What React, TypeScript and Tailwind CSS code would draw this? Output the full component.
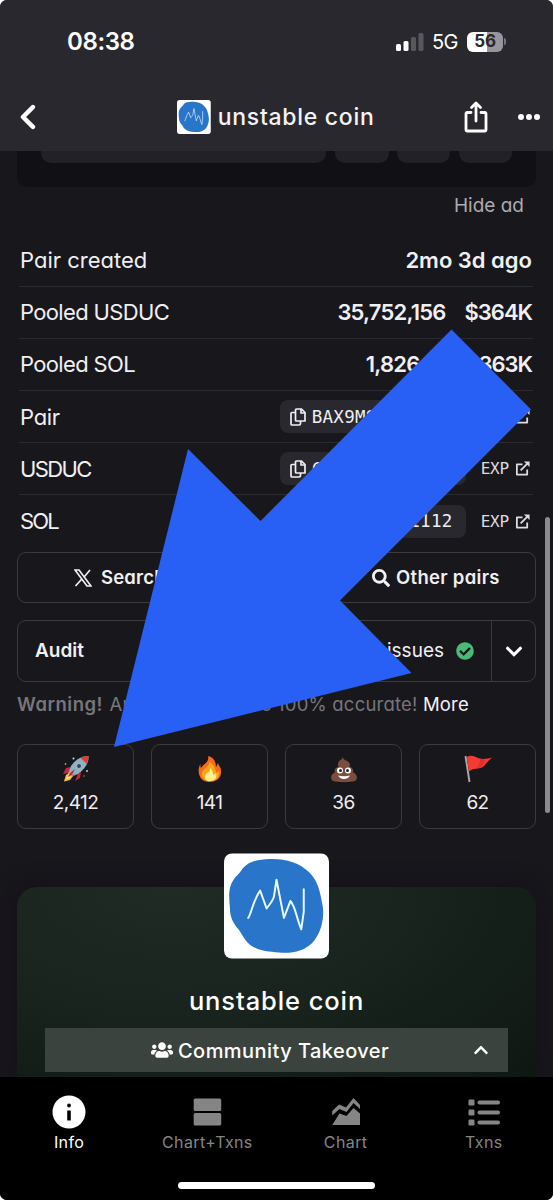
import type { ReactNode } from "react";
import { FaCheckCircle, FaChevronDown, FaChevronUp, FaSearch, FaUsers } from "react-icons/fa";

function CoinLogo({ className }: { className: string }) {
  return (
    <svg viewBox="0 0 106 106" className={className}>
      <rect width="106" height="106" rx="8" fill="#fff" />
      <path
        d="M46 5.500C62 5 76 9 86 19C95 28 97 39 99 50C102 62 99 78 91 88C82 99 68 101 56 100C42 99 32 98 24 90C20 86 18 81 15 77C9 70 6 64 6 55C5 45 4 34 10 26C13 22 17 19 19 15C26 7 36 6 46 5.500Z"
        fill="#2975ca"
      />
      <path
        d="M24.500 65C28 60 29 48 36.500 37.500L43 55.500C47 50 50 47 50.500 43L53 26.500L60.500 65L67 48C72 53 73 65 78 76.500L80.500 59V36"
        fill="none"
        stroke="#e8fbff"
        strokeWidth="2"
        strokeLinecap="round"
        strokeLinejoin="round"
      />
    </svg>
  );
}

function StatusBar() {
  return (
    <div className="flex h-[83px] items-center justify-between pr-[47px] pl-[67px] text-white">
      <span className="text-[24px] leading-none font-semibold tracking-[-0.4px]">08:38</span>
      <div className="flex items-center">
        <svg viewBox="0 0 28 20" className="h-5 w-7">
          <rect x="0" y="12" width="5" height="7" rx="1.500" fill="#fff" />
          <rect x="7.500" y="9" width="5" height="10" rx="1.500" fill="#fff" />
          <rect x="15" y="5" width="5" height="14" rx="1.500" fill="#57575c" />
          <rect x="22.500" y="1" width="5" height="18" rx="1.500" fill="#57575c" />
        </svg>
        <span className="ml-2 w-[28px] text-[20px] leading-none tracking-[-0.6px]">5G</span>
        <div className="ml-[7px] flex h-5 w-9 items-center justify-center rounded-[6px] bg-[linear-gradient(90deg,#fff_56%,#96969b_56%)] text-[17px] leading-none font-bold tracking-[-0.3px] text-[#29282e]">
          56
        </div>
        <div className="ml-px h-[7px] w-[2px] rounded-r-full bg-[#77777c]" />
      </div>
    </div>
  );
}

function Header() {
  return (
    <header className="h-[151px] bg-[#29282e]">
      <StatusBar />
      <div className="flex h-[68px] items-center pr-3 pl-5 text-white">
        <svg viewBox="0 0 16 26" className="h-[26px] w-4">
          <path d="M13 3L3 13L13 23" fill="none" stroke="#fff" strokeWidth="4.500" strokeLinecap="round" strokeLinejoin="round" />
        </svg>
        <CoinLogo className="ml-[141px] h-[34px] w-[34px]" />
        <span className="ml-[7px] w-[248px] text-[23px] leading-none font-medium tracking-[0.72px] whitespace-nowrap text-[#f3f2f6]">
          unstable coin
        </span>
        <svg viewBox="0 0 24 32" className="h-8 w-6 shrink-0" fill="none" stroke="#fff" strokeWidth="2.800" strokeLinecap="round" strokeLinejoin="round">
          <path d="M7 11.500H3.500Q2 11.500 2 13V28.500Q2 30 3.500 30H20.500Q22 30 22 28.500V13Q22 11.500 20.500 11.500H17M12 20V3M7.500 6.500L12 2L16.500 6.500" />
        </svg>
        <svg viewBox="0 0 24 8" className="ml-[29px] h-2 w-6 shrink-0" fill="#fff">
          <circle cx="4" cy="4" r="3" />
          <circle cx="12" cy="4" r="3" />
          <circle cx="20" cy="4" r="3" />
        </svg>
      </div>
    </header>
  );
}

function AdPanel() {
  return (
    <div className="mx-[17px] flex h-[36px] rounded-b-[10px] bg-[#111015] pl-6">
      <div className="h-3 w-[285px] rounded-b-[10px] bg-[#222126]" />
      <div className="ml-[9px] h-3 w-[54px] rounded-b-[10px] bg-[#222126]" />
      <div className="ml-[8px] h-3 w-[53px] rounded-b-[10px] bg-[#222126]" />
      <div className="ml-[9px] h-3 w-[53px] rounded-b-[10px] bg-[#222126]" />
    </div>
  );
}

function Row({ label, labelClass, children }: { label: string; labelClass: string; children: ReactNode }) {
  return (
    <div className="flex h-[52.1px] items-center justify-between border-b border-[#2b2a30] pl-px text-[22px] text-[#f0eff3] last:border-b-0">
      <span className={labelClass}>{label}</span>
      <div className="flex items-center">{children}</div>
    </div>
  );
}

function CopyIcon() {
  return (
    <svg viewBox="0 0 16 18" className="mr-[6px] h-[18px] w-4" fill="none" stroke="#f0eff3" strokeWidth="1.700" strokeLinejoin="round">
      <path d="M6.500 1H11.500L15 4.500V13H6.500Q5.500 13 5.500 12V2Q5.500 1 6.500 1Z" />
      <path d="M11 1V5H15" />
      <path d="M5.500 4.500H2Q1 4.500 1 5.500V16Q1 17 2 17H9Q10.500 17 10.500 15.500V13" />
    </svg>
  );
}

function ExternalIcon() {
  return (
    <svg viewBox="0 0 16 16" className="ml-[6px] h-[15px] w-[15px]" fill="none" stroke="#dddce0" strokeWidth="1.900" strokeLinejoin="round">
      <path d="M8 3.500H2V14.500H13V9M6 10L14 2" />
      <path d="M9.500 0.500H15.500V6.500Z" fill="#dddce0" stroke="none" />
    </svg>
  );
}

function AddressRow({ label, labelClass, address }: { label: string; labelClass: string; address: string }) {
  return (
    <Row label={label} labelClass={labelClass}>
      <div className="flex h-[33px] w-[186px] items-center rounded-[8px] bg-[#29282e] pl-[10px] font-['DejaVu_Sans_Mono',monospace] text-[17.500px] tracking-[0.3px] whitespace-nowrap">
        <CopyIcon />
        {address}
      </div>
      <span className="ml-[15px] font-['DejaVu_Sans_Mono',monospace] text-[16px] tracking-[-0.2px] text-[#dddce0]">EXP</span>
      <span className="mr-[3px]">
        <ExternalIcon />
      </span>
    </Row>
  );
}

function Pair({ amount, value }: { amount: string; value: string }) {
  return (
    <div className="flex font-semibold">
      <span className="tracking-[-0.8px]">{amount}</span>
      <span className="mr-px ml-[19px] tracking-[-1px]">{value}</span>
    </div>
  );
}

function Rocket() {
  return (
    <svg viewBox="0 0 28 28" className="h-7 w-7">
      <path d="M9 12L4 13L1 19L7 18ZM16 19L13 26L18 23L19 17Z" fill="#c5283d" />
      <path d="M26.500 1C19 1 13 5 9 11L6 19L9 22L16 19C23 14 27 8 26.500 1Z" fill="#8fb2c2" />
      <path d="M26.500 1C24 1 21 1.500 18.500 3L25 9C26 6 26.700 4 26.500 1Z" fill="#e13d38" />
      <path d="M6 19L9 22L16 19L11 20Z" fill="#587280" />
      <path d="M7 18L4 20L2 26.500L8 25L11 21Z" fill="#f9c33f" />
      <path d="M7 20L4 24L8 23Z" fill="#fff3b6" />
      <path d="M13 14L8 18L6 22L10 20Z" fill="#c5283d" />
      <circle cx="17" cy="11" r="2.500" fill="#32485d" stroke="#b9cbd3" strokeWidth="0.800" />
      <circle cx="11.500" cy="3.500" r="1" fill="#ddd" />
      <circle cx="3.500" cy="9" r="0.800" fill="#ddd" />
      <circle cx="25" cy="16" r="0.900" fill="#ddd" />
      <circle cx="22" cy="21" r="0.700" fill="#99a" />
    </svg>
  );
}

function Fire() {
  return (
    <svg viewBox="0 0 28 28" className="h-7 w-7">
      <path d="M12 1C14 7 6 10 5 13C4 12 4.500 10 4.500 9C2.500 12 2 17 3.500 20.500C5 25 9 27 14 27C21 27 26 22 25 15C25 12 22 10 22 8C21 9 21 11 20 12C20 6 17 2 12 1Z" fill="#f96a18" />
      <path d="M13 6C15 11 7 13 6 18C5 22 8 26 14 26C20 26 24 22 23 16L20 18C20 14 17 9 13 6Z" fill="#fda61e" />
      <path d="M14 13C15 17 10 18 9 21C8 24 10 26 14 26C19 26 21 23 20 18L17 20C17 17 16 14 14 13Z" fill="#fff08b" />
    </svg>
  );
}

function Poop() {
  return (
    <svg viewBox="0 0 28 28" className="h-7 w-7">
      <path d="M13 1C13 5 8 5 8 9C8 10 8 11 8.500 12C5 12 4 16 5 17.500C0.500 19 0 24 3 26C7 27.500 21 27.500 25 26C28 24 27.500 19 23 17.500C24 15 22 12 19.500 12C21 8 18 6 15 5C13 4 13 3 13 1Z" fill="#7b4d3e" />
      <circle cx="10" cy="15.500" r="3" fill="#fff" />
      <circle cx="18" cy="15.500" r="3" fill="#fff" />
      <circle cx="10.500" cy="15.500" r="1.500" fill="#31211e" />
      <circle cx="17.500" cy="15.500" r="1.500" fill="#31211e" />
      <path d="M8 20.500Q14 22 20 20.500Q18 24 14 24Q10 24 8 20.500Z" fill="#fff" />
    </svg>
  );
}

function Flag() {
  return (
    <svg viewBox="0 0 28 28" className="h-7 w-7">
      <path d="M1.500 1L5.500 27" stroke="#aaa9ad" strokeWidth="1.900" />
      <path d="M2.800 2C7 -0.500 11 1.500 14 3C19 5 24 3.500 28 2.500C24 6 22 9 19 12C14 15 10 12 5 16.500Z" fill="#f53a35" />
      <path d="M15 3.500C17 5 16 9 12 13.500L18 12C20 8 21 5 21 4.500Z" fill="#d42427" opacity="0.550" />
    </svg>
  );
}

function Reaction({ icon, count }: { icon: ReactNode; count: string }) {
  return (
    <div className="flex h-[85px] flex-col items-center rounded-[9px] border-[1.500px] border-[#3b3a3f] pt-[10px] text-[19px] leading-none text-[#efeef2]">
      {icon}
      <span className="mt-[10px] tracking-[-0.6px]">{count}</span>
    </div>
  );
}

function Tab({ label, active, children }: { label: string; active?: boolean; children: ReactNode }) {
  return (
    <div className={active ? "flex flex-1 flex-col items-center text-white" : "flex flex-1 flex-col items-center text-[#858585]"}>
      <svg viewBox="0 0 34 34" className="h-[34px] w-[34px]" fill="currentColor">
        {children}
      </svg>
      <span className="mt-[4px] text-[16px] leading-[18px] tracking-[0.4px]">{label}</span>
    </div>
  );
}

export default function App() {
  return (
    <div className="bg-white">
      <div className="relative flex h-[1200px] w-[553px] flex-col overflow-hidden rounded-[7px] bg-[#18171c] font-[Inter,sans-serif]">
        <Header />
        <div className="flex flex-1 flex-col [font-feature-settings:'cv11']">
          <AdPanel />
          <div className="flex h-[48px] items-center justify-end pr-[29px] pb-[10px] text-[19px] text-[#acabb0]">Hide ad</div>
          <div className="mr-5 ml-[19px]">
            <Row label="Pair created" labelClass="">
              <span className="mr-px font-semibold">2mo 3d ago</span>
            </Row>
            <Row label="Pooled USDUC" labelClass="tracking-[-0.650px]">
              <Pair amount="35,752,156" value="$364K" />
            </Row>
            <Row label="Pooled SOL" labelClass="tracking-[-0.650px]">
              <Pair amount="1,826.31" value="$363K" />
            </Row>
            <AddressRow label="Pair" labelClass="pt-px tracking-[-0.300px]" address="BAX9MS...hgqT" />
            <AddressRow label="USDUC" labelClass="pt-px tracking-[-1.600px]" address="CB9dDu...pump" />
            <AddressRow label="SOL" labelClass="tracking-[-1.900px]" address="So1111...1112" />
          </div>
          <div className="mx-[17px] mt-[4.500px] flex gap-[17px] text-[18.500px] font-semibold text-[#f0eff3]">
            <div className="flex h-[51px] w-[301px] items-center rounded-[9px] border-[1.500px] border-[#3b3a3f] pl-[56px] tracking-[0.2px]">
              <svg viewBox="0 0 18 18" className="mr-[9px] h-[18px] w-[18px]" fill="none" stroke="#f0eff3" strokeWidth="1.700">
                <path d="M1 1H5L17 17H13ZM16 1L10.300 7.700M7.600 10.300L1.500 17" />
              </svg>
              Search on Twitter
            </div>
            <div className="flex h-[51px] flex-1 items-center rounded-[9px] border-[1.500px] border-[#3b3a3f] pl-[36px] tracking-[0.3px]">
              <FaSearch className="mr-[6px] h-[18px] w-[18px]" />
              Other pairs
            </div>
          </div>
          <div className="mx-[17px] mt-[17px] flex h-[62px] items-center rounded-[9px] border-[1.500px] border-[#3b3a3f] text-[19px] text-[#f0eff3]">
            <span className="pt-px pl-[17px] font-semibold">Audit</span>
            <span className="ml-auto pt-px">No issues</span>
            <FaCheckCircle className="mr-[17px] ml-[12px] h-[18px] w-[18px] text-[#48bb78]" />
            <div className="flex h-full w-[44px] items-center justify-center border-l-[1.500px] border-[#3b3a3f]">
              <FaChevronDown className="h-[19px] w-[18px] text-white" />
            </div>
          </div>
          <div className="mx-[17px] mt-[8px] h-7 text-[18.500px] leading-7 tracking-[0.2px] whitespace-nowrap text-[#77767b]">
            <b className="mr-px font-semibold tracking-[0.5px]">Warning!</b> Audits may not be 100% accurate! <span className="text-[#f4f3f6]">More</span>
          </div>
          <div className="mx-[17px] mt-[26px] grid grid-cols-4 gap-[17px]">
            <Reaction icon={<Rocket />} count="2,412" />
            <Reaction icon={<Fire />} count="141" />
            <Reaction icon={<Poop />} count="36" />
            <Reaction icon={<Flag />} count="62" />
          </div>
        </div>
        <section className="mx-[17px] flex h-[190px] shrink-0 flex-col items-center rounded-t-[20px] bg-[radial-gradient(ellipse_at_30%_0%,#202b25_0%,#18231d_50%,#0f1712_100%)] shadow-[0_0_22px_rgba(20,12,25,0.8)]">
          <CoinLogo className="-mt-[34px] h-[106px] w-[105px] shrink-0" />
          <h2 className="mt-[27px] text-[25.500px] leading-[30px] font-medium tracking-[0.9px] text-white">unstable coin</h2>
          <div className="mt-[12px] flex h-[44px] w-[463px] shrink-0 items-center bg-[#3b433e] pl-[106px] text-white">
            <FaUsers className="h-[22px] w-[22px]" />
            <span className="ml-[5px] pt-px text-[20px] leading-none font-medium tracking-[0.45px] whitespace-nowrap">Community Takeover</span>
            <FaChevronUp className="mr-[19px] ml-auto h-4 w-4" />
          </div>
        </section>
        <nav className="flex h-[123px] shrink-0 flex-col items-center bg-black">
          <div className="flex w-full pt-[18px]">
            <Tab label="Info" active>
              <circle cx="17" cy="17" r="16.500" />
              <circle cx="17" cy="10.500" r="1.900" fill="#000" />
              <rect x="15.200" y="15.500" width="3.600" height="10" rx="0.500" fill="#000" />
            </Tab>
            <Tab label="Chart+Txns">
              <rect x="3.700" y="3.500" width="27.500" height="12.500" rx="1.500" />
              <rect x="3.700" y="18" width="27.500" height="12.500" rx="1.500" />
            </Tab>
            <Tab label="Chart">
              <path d="M3.200 16L10 9.500L17 12.500L24.500 3L31 10V14L24.500 8L17.500 17L10.500 14L3.200 20.500Z" />
              <path d="M3.200 30L10.500 18.500L17.500 21L24.500 13L31 18.500V30Z" />
            </Tab>
            <Tab label="Txns">
              <rect x="1.500" y="4.500" width="6" height="6" rx="1.200" />
              <rect x="1.500" y="14.500" width="6" height="6" rx="1.200" />
              <rect x="1.500" y="24.500" width="6" height="6" rx="1.200" />
              <rect x="10.500" y="5.500" width="22.500" height="4" rx="2" />
              <rect x="10.500" y="15.500" width="22.500" height="4" rx="2" />
              <rect x="10.500" y="25.500" width="22.500" height="4" rx="2" />
            </Tab>
          </div>
          <div className="mt-[31px] h-[7px] w-[197px] rounded-full bg-white" />
        </nav>
        <div className="absolute top-[517px] right-[3.500px] h-[296px] w-[4.500px] rounded-full bg-[#8b8a8e]" />
        <svg viewBox="0 0 553 1200" className="pointer-events-none absolute inset-0 h-[1200px] w-[553px]">
          <polygon points="114,747 188,449 260.500,521 451.500,329.500 531,409.500 340,600.500 411.500,673" fill="#285ff5" />
        </svg>
      </div>
    </div>
  );
}
